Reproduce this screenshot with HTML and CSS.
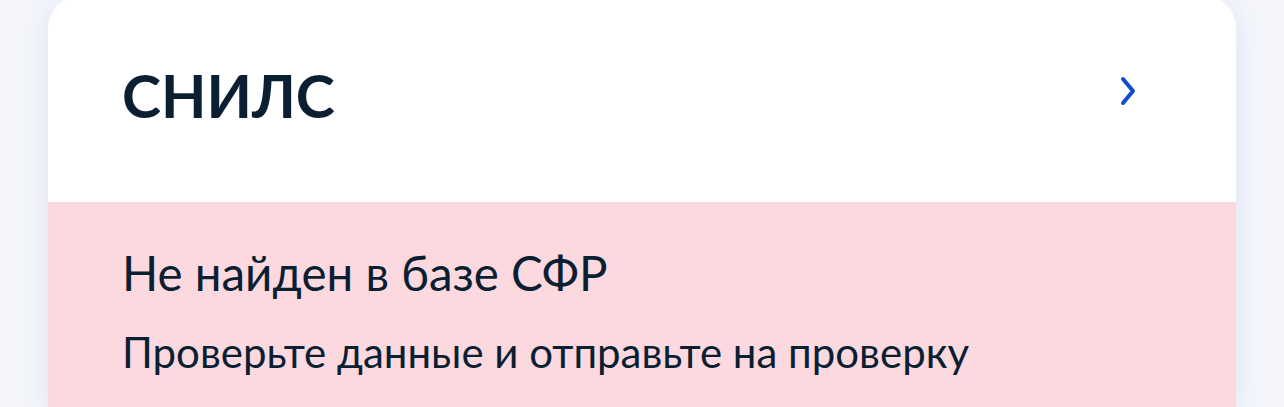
FILE: index.html
```html
<!DOCTYPE html>
<html lang="ru">
<head>
  <meta charset="UTF-8">
  <title>СНИЛС</title>
  <meta name="viewport" content="width=device-width, initial-scale=1.0">
  <link rel="stylesheet" href="styles.css">
</head>
<body>
  <div class="doc-card">
    <a class="doc-head" href="#">
      <h2 class="doc-title">СНИЛС</h2>
      <svg class="doc-arrow" width="16" height="30" viewBox="0 0 16 30" aria-hidden="true">
        <path d="M3 3 L13 15 L3 27" fill="none" stroke="#0d4cd3" stroke-width="4" stroke-linecap="round" stroke-linejoin="round"/>
      </svg>
    </a>

    <!-- статус проверки -->
    <div class="doc-status">
      <p class="status-title">Не найден в базе СФР</p>
      <p class="status-text">Проверьте данные и отправьте на проверку</p>
    </div>
  </div>
</body>
</html>
```

FILE: styles.css
```css
:root {
  --text-dark: #0b1f33;
  --accent: #0d4cd3;
  --error-bg: #fbd9df;
  --page-bg: #f4f6fb;
}

body {
  margin: 0;
  padding: 0 48px;
  background: var(--page-bg);
  font-family: Lato, "Open Sans", sans-serif;
  color: var(--text-dark);
}

.doc-card {
  margin-top: -4px;
  background: white;
  border-radius: 32px 32px 0 0;
  overflow: hidden;
  box-shadow: 0 4px 28px rgba(66, 98, 183, 0.12);
}

.doc-head {
  display: flex;
  justify-content: space-between;
  align-items: center;
  height: 206px;
  padding: 0 100px 6px 74px;
  box-sizing: border-box;
  text-decoration: none;
  color: inherit;
}

.doc-title {
  margin: 0;
  font-size: 59px;
  font-weight: 700;
  line-height: 1.2;
}

.doc-arrow {
  display: block;
  margin-top: -10px;
}

.doc-status {
  background: var(--error-bg);
  padding: 42px 74px 30px;
}

.status-title {
  margin: 0;
  font-size: 47.5px;
  line-height: 1.2;
}

.status-text {
  margin: 26px 0 0;
  font-size: 42px;
  line-height: 1.2;
}
```
